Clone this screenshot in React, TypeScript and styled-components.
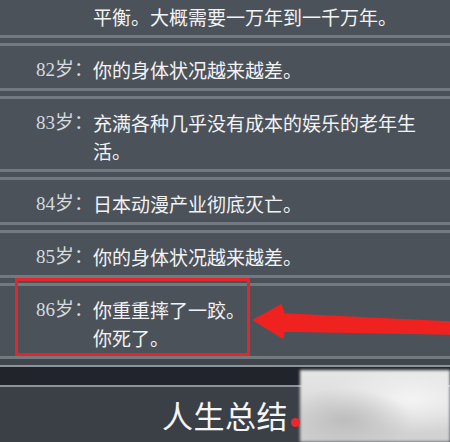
import styled, { createGlobalStyle } from "styled-components";

const GlobalStyle = createGlobalStyle`
  html, body { margin: 0; padding: 0; background: #4b5159; }
  * { box-sizing: border-box; }
`;

const Page = styled.div`
  width: 450px;
  height: 442px;
  display: flex;
  flex-direction: column;
  overflow: hidden;
  background: #4b5159;
  font-family: "Noto Sans CJK SC", "Noto Sans", sans-serif;
`;

const LogList = styled.div`
  flex: 1;
  overflow: hidden;
`;

const LogInner = styled.div`
  display: flex;
  flex-direction: column;
  gap: 5px;
  margin-top: -10px;
`;

const Entry = styled.div`
  position: relative;
  display: grid;
  grid-template-columns: 57px 1fr;
  padding: 10px 20px 4px 36px;
  border-top: 3px solid #737980;
  border-bottom: 3px solid #737980;
  background: #4c525a;
`;

const Age = styled.span`
  font-family: "Liberation Serif", "Noto Sans CJK SC", serif;
  font-size: 19px;
  line-height: 28px;
  color: #d6d9dd;
  white-space: nowrap;
`;

const Text = styled.div`
  font-size: 19px;
  line-height: 28px;
  color: #f2f3f5;
`;

const Highlight = styled.div`
  position: absolute;
  left: 15px;
  top: -8px;
  width: 235px;
  height: 78px;
  border: 3px solid #e3262b;
  pointer-events: none;
`;

const Arrow = styled.svg`
  position: absolute;
  left: 253px;
  top: 18px;
  width: 197px;
  height: 34px;
  overflow: visible;
`;

const Footer = styled.div`
  position: relative;
  flex-shrink: 0;
  padding-top: 6px;
  background: #41464d;
`;

const Shelf = styled.div`
  height: 22px;
  background: #21252b;
  border-top: 2px solid #8d939a;
  border-bottom: 2px solid #8d939a;
`;

const Summary = styled.div`
  height: 55px;
  display: flex;
  align-items: center;
  justify-content: center;
  background: #3b4047;
  color: #f4f5f6;
  font-size: 31px;
  letter-spacing: 0.5px;
`;

const Stamp = styled.div`
  position: absolute;
  right: 0;
  top: 11px;
  width: 150px;
  height: 72px;
  background:
    radial-gradient(ellipse at 30% 70%, #bdbdbd 0%, transparent 45%),
    radial-gradient(ellipse at 75% 40%, #f4f4f4 0%, transparent 55%),
    linear-gradient(180deg, #e6e6e6 0%, #d9d9d9 60%, #cfcfcf 100%);
  filter: blur(1.5px);
`;

const Dot = styled.span`
  position: absolute;
  left: 291px;
  top: 59px;
  width: 9px;
  height: 9px;
  border-radius: 50%;
  background: #f0262a;
`;

type Log = { age?: number; lines: string[]; marked?: boolean };

const logs: Log[] = [
  { lines: ["平衡。大概需要一万年到一千万年。"] },
  { age: 82, lines: ["你的身体状况越来越差。"] },
  { age: 83, lines: ["充满各种几乎没有成本的娱乐的老年生活。"] },
  { age: 84, lines: ["日本动漫产业彻底灭亡。"] },
  { age: 85, lines: ["你的身体状况越来越差。"] },
  { age: 86, lines: ["你重重摔了一跤。", "你死了。"], marked: true },
];

export default function App() {
  return (
    <>
      <GlobalStyle />
      <Page>
        <LogList>
          <LogInner>
            {logs.map((log, i) => (
              <Entry key={i}>
                <Age>{log.age ? `${log.age}岁：` : ""}</Age>
                <Text>
                  {log.lines.map((l, j) => (
                    <div key={j}>{l}</div>
                  ))}
                </Text>
                {log.marked && (
                  <>
                    <Highlight />
                    <Arrow viewBox="0 0 197 34">
                      {/* hand-drawn pointer: wide head, tapering tail */}
                      <polygon
                        points="1,16 28,1 31,10 197,18 197,30 31,27 30,34"
                        fill="#f0221f"
                        stroke="#f0221f"
                        strokeWidth="1.5"
                        strokeLinejoin="round"
                      />
                    </Arrow>
                  </>
                )}
              </Entry>
            ))}
          </LogInner>
        </LogList>
        <Footer>
          <Shelf />
          <Summary>人生总结</Summary>
          <Stamp />
          <Dot />
        </Footer>
      </Page>
    </>
  );
}
